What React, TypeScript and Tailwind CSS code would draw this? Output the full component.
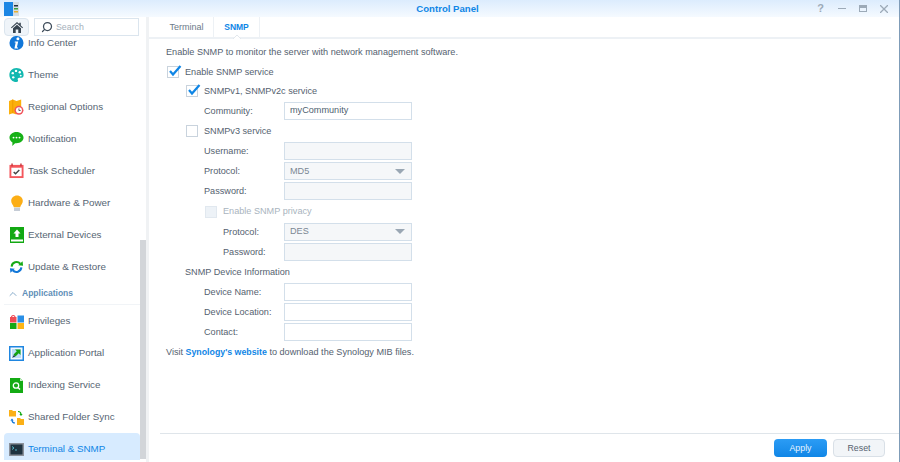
import type { ReactNode } from 'react'
import { ChevronUp, Search } from 'lucide-react'

const font = "font-['Liberation_Sans',Arial,sans-serif]"

function IconInfo() {
  return (
    <svg width="16" height="16" viewBox="0 0 16 16">
      <circle cx="8" cy="8" r="7.5" fill="#1277d8" />
      <circle cx="9.5" cy="3.4" r="1.6" fill="#fff" />
      <path d="M6.200 6.400h3.600l-1.400 6.400h1.200v1H5.800l1.300-6.400H6z" fill="#fff" />
    </svg>
  )
}

function IconTheme() {
  return (
    <svg width="16" height="16" viewBox="0 0 16 16">
      <path d="M8 .6C3.500.6.400 3.700.400 8c0 4.400 3.400 7.500 7.400 7.500 2 0 2.200-1.300 1.600-2.400-.6-1.200.2-2.300 1.600-2.300h2.400c1.500 0 2.200-1.200 2.200-2.800C15.600 3.500 12.300.6 8 .6z" fill="#12b8b0" />
      <circle cx="4" cy="6" r="1.300" fill="#fff" />
      <circle cx="7.500" cy="3.600" r="1.300" fill="#fff" />
      <circle cx="11.500" cy="5" r="1.300" fill="#fff" />
      <circle cx="4.500" cy="10.500" r="1.300" fill="#fff" />
      <circle cx="12.500" cy="8.600" r="1" fill="#fff" />
    </svg>
  )
}

function IconRegional() {
  return (
    <svg width="16" height="17" viewBox="0 0 16 17">
      <path d="M0 1.500 4 0l4 1.500L13 0v8H8v8L4 14.500 0 16z" fill="#fbb00c" />
      <path d="M4 0v14.500" stroke="#f09a00" />
      <circle cx="10.600" cy="11.500" r="4.800" fill="#f2545b" />
      <circle cx="10.600" cy="11.500" r="3.200" fill="#fff" />
      <path d="M10.600 9.500v2.200h1.800" stroke="#555" fill="none" />
    </svg>
  )
}

function IconNotification() {
  return (
    <svg width="16" height="16" viewBox="0 0 16 16">
      <path d="M8 .5c4.300 0 7.500 2.700 7.500 6s-3.200 6-7.500 6c-.5 0-1 0-1.500-.1L3.500 15.500l.2-3.900C1.700 10.500.5 8.700.5 6.500c0-3.300 3.200-6 7.500-6z" fill="#17b117" />
      <circle cx="4.800" cy="6.500" r="1" fill="#fff" />
      <circle cx="8" cy="6.500" r="1" fill="#fff" />
      <circle cx="11.200" cy="6.500" r="1" fill="#fff" />
    </svg>
  )
}

function IconTask() {
  return (
    <svg width="16" height="16" viewBox="0 0 16 16">
      <rect x="0.500" y="1.500" width="15" height="14" fill="#f4575c" />
      <rect x="2.500" y="4.500" width="11" height="9" fill="#fff" />
      <rect x="2.500" y="0" width="1.500" height="3" fill="#c9353a" />
      <rect x="12" y="0" width="1.500" height="3" fill="#c9353a" />
      <path d="m5 9 2 2 4-4" stroke="#444" strokeWidth="1.500" fill="none" />
    </svg>
  )
}

function IconBulb() {
  return (
    <svg width="14" height="17" viewBox="0 0 14 17">
      <path d="M7 .5c3.300 0 5.800 2.400 5.800 5.500 0 2.600-2 3.800-2.600 6.200H3.800C3.200 9.800 1.200 8.600 1.200 6 1.200 2.900 3.700.5 7 .5z" fill="#fcae16" />
      <rect x="4" y="12.600" width="6" height="3.400" fill="#c5ccd6" />
    </svg>
  )
}

function IconExternal() {
  return (
    <svg width="14" height="16" viewBox="0 0 14 16">
      <rect width="14" height="16" fill="#12a812" />
      <path d="M7 2.500 10.500 6.500H8.500v3.500h-3V6.500H3.500z" fill="#fff" />
      <rect x="1" y="12.500" width="12" height="2" fill="#fff" />
    </svg>
  )
}

function IconUpdate() {
  return (
    <svg width="16" height="14" viewBox="0 0 16 14">
      <path d="M2.800 6.500A5.300 5.300 0 0 1 12 3.500" stroke="#16a916" strokeWidth="2.200" fill="none" />
      <path d="M9.800 5.200 15 5.700 14.500.8z" fill="#16a916" />
      <path d="M13.200 7.500A5.300 5.300 0 0 1 4 10.500" stroke="#1277d8" strokeWidth="2.200" fill="none" />
      <path d="M6.200 8.800 1 8.300 1.500 13.200z" fill="#1277d8" />
    </svg>
  )
}

function IconPrivileges() {
  return (
    <svg width="14" height="15" viewBox="0 0 14 15">
      <rect x="0" y="3" width="6.500" height="5.500" fill="#ef4c55" />
      <path d="M1.500 3.500C1.500.8 5 .8 5 3.500" stroke="#ef4c55" strokeWidth="1.200" fill="none" />
      <rect x="7.500" y="1.500" width="6.500" height="7" fill="#2a8fe6" />
      <rect x="0" y="9" width="6.500" height="6" fill="#16a916" />
      <rect x="7.500" y="9" width="6.500" height="6" fill="#fdb515" />
    </svg>
  )
}

function IconPortal() {
  return (
    <svg width="15" height="15" viewBox="0 0 15 15">
      <rect width="15" height="15" fill="#1f86e0" />
      <rect x="1.500" y="1.500" width="12" height="12" fill="#f3f9ff" />
      <rect x="3" y="3" width="9" height="9" fill="#bcdcf7" />
      <path d="M6 3.500h5.500V9L9.700 7.200 6.500 10.500 4.500 8.500l3.300-3.200z" fill="#13a313" />
      <path d="M3.200 11.800 5 8.800l1.300 1.700z" fill="#1f3b45" />
    </svg>
  )
}

function IconIndexing() {
  return (
    <svg width="13" height="15" viewBox="0 0 13 15">
      <path d="M0 0h10l3 3v12H0z" fill="#14ab14" />
      <path d="M10 0v3h3z" fill="#c8efc8" />
      <circle cx="6" cy="7.500" r="2.700" fill="none" stroke="#fff" strokeWidth="1.300" />
      <path d="m8 9.500 2 2" stroke="#fff" strokeWidth="1.500" />
    </svg>
  )
}

function IconFolderSync() {
  return (
    <svg width="15" height="15" viewBox="0 0 15 15">
      <path d="M0 0h3l1 1h3v5.500H0z" fill="#fbb016" />
      <path d="M8 8h3l1 1h3v6H8z" fill="#fbb016" />
      <path d="M9 1.500c2 0 3 1 3 3" stroke="#16a916" strokeWidth="1.200" fill="none" />
      <path d="m10.300 4 1.700 2 1.700-2z" fill="#16a916" />
      <path d="M6 13c-2 0-3-1-3-3" stroke="#1277d8" strokeWidth="1.200" fill="none" />
      <path d="m1.300 10.500 1.700-2 1.700 2z" fill="#1277d8" />
    </svg>
  )
}

function IconTerminal() {
  return (
    <svg width="15" height="13" viewBox="0 0 15 13">
      <rect width="15" height="13" fill="#8b919a" />
      <rect x="1.500" y="1.500" width="12" height="10" fill="#1f3340" />
      <path d="m3 3.500 2 1.500-2 1.500" stroke="#58b8c8" fill="none" />
      <path d="M6 7h2" stroke="#58b8c8" />
    </svg>
  )
}

function NavItem({ icon, label, active }: { icon: ReactNode; label: string; active?: boolean }) {
  return (
    <div
      className={`flex h-8 items-center ${active ? 'rounded-sm bg-[#d7ebff] text-[#0f86e6]' : 'text-[#566573]'}`}
    >
      <div className="flex w-[20px] shrink-0 justify-center pl-[5px]">{icon}</div>
      <span className="ml-[4px] text-[9.800px] leading-none">{label}</span>
    </div>
  )
}

function Check({ checked, disabled }: { checked?: boolean; disabled?: boolean }) {
  return (
    <div
      className={`relative h-[12px] w-[12px] shrink-0 border ${disabled ? 'border-[#e1e8ef] bg-[#edf2f7]' : 'border-[#c9d3dd] bg-white'}`}
    >
      {checked && (
        <svg className="absolute -top-[2px] left-[0px]" width="14" height="12" viewBox="0 0 14 12">
          <path d="m2 6 3 3.500L12.500 1" stroke="#0f86e6" strokeWidth="2.200" fill="none" />
        </svg>
      )}
    </div>
  )
}

function Field({ label, value, select, disabled, indent }: { label: string; value?: string; select?: boolean; disabled?: boolean; indent?: boolean }) {
  return (
    <div className={`flex h-[20.100px] items-center ${indent ? 'pl-[57px]' : 'pl-[38px]'}`}>
      <span className={`whitespace-nowrap pt-[1px] leading-none text-[#55626f] ${indent ? 'w-[61px]' : 'w-[80px]'}`}>{label}</span>
      <div
        className={`flex h-[18px] w-[128px] items-center justify-between border border-[#d3dfea] px-[5px] leading-none ${disabled ? 'bg-[#f5f7f9] text-[#7a8794]' : 'bg-white text-[#4f5f70]'}`}
      >
        <span>{value}</span>
        {select && (
          <svg width="10" height="5" viewBox="0 0 10 5" className="mr-[1px]">
            <path d="M0 0h10L5 5z" fill="#9aa7b4" />
          </svg>
        )}
      </div>
    </div>
  )
}

function CheckRow({ label, checked, disabled, pad, height }: { label: string; checked?: boolean; disabled?: boolean; pad: string; height: string }) {
  return (
    <div className={`flex items-center gap-[6px] ${height} ${pad}`}>
      <Check checked={checked} disabled={disabled} />
      <span className={`pt-[1px] leading-none ${disabled ? 'text-[#a9b4be]' : 'text-[#55626f]'}`}>{label}</span>
    </div>
  )
}

export default function App() {
  return (
    <div className={`flex h-[462px] w-[900px] flex-col overflow-hidden border-r border-[#7f9cb8] bg-white ${font}`}>
      {/* Title bar */}
      <div className="grid h-[17px] shrink-0 grid-cols-[100px_1fr_100px] items-center bg-gradient-to-b from-[#dcecfd] to-[#f5faff]">
        <div className="pl-[4px]">
          <svg width="15" height="14" viewBox="0 0 15 14">
            <rect width="9" height="14" fill="#1b86e4" />
            <rect x="9" width="6" height="14" fill="#d5dde4" />
            <rect x="10" y="3" width="4" height="1.500" fill="#26323d" />
            <rect x="10" y="6" width="4" height="1.500" fill="#3da03d" />
            <rect x="10" y="9" width="4" height="1.500" fill="#e8b030" />
          </svg>
        </div>
        <div className="pr-[4px] text-center text-[9.600px] font-bold leading-none text-[#0f86e6]">Control Panel</div>
        <div className="flex items-center justify-end pr-[5px] text-[#9caab8]">
          <div className="flex w-[21px] justify-center text-[11px] font-bold leading-none">?</div>
          <div className="flex w-[21px] justify-center">
            <div className="h-[1.500px] w-[8px] bg-[#9caab8]" />
          </div>
          <div className="flex w-[21px] justify-center">
            <div className="h-[7px] w-[8px] border border-t-[3px] border-[#9caab8]" />
          </div>
          <div className="flex w-[21px] justify-center">
            <svg width="8" height="8" viewBox="0 0 8 8">
              <path d="m0 0 8 8M8 0 0 8" stroke="#9caab8" strokeWidth="1.300" />
            </svg>
          </div>
        </div>
      </div>

      <div className="flex min-h-0 flex-1">
        {/* Sidebar */}
        <aside className="relative w-[149px] shrink-0 overflow-hidden border-r-[3px] border-[#f0f2f4]">
          <div className="flex h-[19px] gap-[5px] bg-white pl-[4px] pt-[1px]">
            <div className="flex h-[18px] w-[25px] items-center justify-center rounded-sm border border-[#dbe5ee] bg-[#eff4f9]">
              <svg width="12" height="11" viewBox="0 0 12 11">
                <path d="M6 0 0 5.500l.7.800L6 1.500l5.300 4.800.7-.8L9.800 3.500V.8H8.300v1.300z" fill="#36434f" />
                <path d="M2 6.300 6 2.700l4 3.600V11H7.300V7.500H4.700V11H2z" fill="#36434f" />
              </svg>
            </div>
            <div className="flex h-[18px] w-[105px] items-center gap-[3px] border border-[#dbe5ee] bg-white pl-[6px] text-[8.800px] leading-none text-[#a5b0bb]">
              <Search size={12} className="-scale-x-100 text-[#3e4c5a]" strokeWidth={2.500} />
              <span>Search</span>
            </div>
          </div>
          <div className="h-[424px] w-[140px] overflow-hidden pl-[4px]">
            <div className="-mt-[9px]">
              <NavItem icon={<IconInfo />} label="Info Center" />
              <NavItem icon={<IconTheme />} label="Theme" />
              <NavItem icon={<IconRegional />} label="Regional Options" />
              <NavItem icon={<IconNotification />} label="Notification" />
              <NavItem icon={<IconTask />} label="Task Scheduler" />
              <NavItem icon={<IconBulb />} label="Hardware & Power" />
              <NavItem icon={<IconExternal />} label="External Devices" />
              <NavItem icon={<IconUpdate />} label="Update & Restore" />
              <div className="flex h-[22px] items-center gap-[3px] border-b border-[#f1f4f7] pl-[3px] text-[8.500px] font-bold leading-none text-[#5f8fb8]">
                <ChevronUp size={12} strokeWidth={1.500} />
                <span>Applications</span>
              </div>
              <NavItem icon={<IconPrivileges />} label="Privileges" />
              <NavItem icon={<IconPortal />} label="Application Portal" />
              <NavItem icon={<IconIndexing />} label="Indexing Service" />
              <NavItem icon={<IconFolderSync />} label="Shared Folder Sync" />
              <NavItem active icon={<IconTerminal />} label="Terminal & SNMP" />
            </div>
          </div>
          <div className="absolute left-[140px] top-[223px] h-[219px] w-[6px] bg-[#d2d5d9]" />
        </aside>

        {/* Main panel */}
        <main className="flex min-w-0 flex-1 flex-col">
          <div className="mr-[8px] flex h-[22px] shrink-0 border-b-2 border-[#edf1f5] pl-[11px] leading-none">
            <div className="flex w-[54px] items-center justify-center border-r border-[#edf1f5] text-[9px] text-[#6c7a88]">Terminal</div>
            <div className="relative flex w-[46px] items-center justify-center border-r border-[#edf1f5] text-[8.500px] font-bold text-[#0f86e6]">
              SNMP
              <svg className="absolute -bottom-[2px] left-[19px]" width="8" height="4" viewBox="0 0 8 4">
                <path d="M0 4 4 0l4 4" fill="#fff" stroke="#e3e8ed" />
              </svg>
            </div>
          </div>
          <div className="flex-1 pl-[17px] pt-[3px] text-[9.150px] text-[#55626f]">
            <div className="flex h-[20px] items-center pt-[1px] leading-none">Enable SNMP to monitor the server with network management software.</div>
            <CheckRow label="Enable SNMP service" checked height="h-[19.500px]" pad="pl-[1px]" />
            <CheckRow label="SNMPv1, SNMPv2c service" checked height="h-[19.500px]" pad="pl-[20px]" />
            <Field label="Community:" value="myCommunity" />
            <CheckRow label="SNMPv3 service" height="h-[20.100px]" pad="pl-[20px]" />
            <Field label="Username:" disabled />
            <Field label="Protocol:" value="MD5" select disabled />
            <Field label="Password:" disabled />
            <CheckRow label="Enable SNMP privacy" disabled height="h-[20.100px]" pad="pl-[39px]" />
            <Field label="Protocol:" value="DES" select disabled indent />
            <Field label="Password:" disabled indent />
            <div className="flex h-[20.100px] items-center pl-[19px] pt-[1px] leading-none">SNMP Device Information</div>
            <Field label="Device Name:" />
            <Field label="Device Location:" />
            <Field label="Contact:" />
            <div className="flex h-[20.100px] items-center gap-[2.500px] leading-none">
              <span>Visit</span>
              <span className="text-[8.800px] font-bold text-[#0f86e6]">Synology's website</span>
              <span>to download the Synology MIB files.</span>
            </div>
          </div>
          <div className="ml-[11px] flex h-[29px] shrink-0 items-start justify-end gap-[6px] border-t border-[#dfe5ea] pr-[14px] pt-[5px] text-[8.800px] leading-none">
            <button className="h-[18px] w-[53px] rounded-sm bg-gradient-to-b from-[#2b9cf5] to-[#0f86e6] text-[#e8f4ff]">Apply</button>
            <button className="h-[18px] w-[52px] rounded-sm border border-[#d9e0e7] bg-[#f2f5f8] text-[#55626f]">Reset</button>
          </div>
        </main>
      </div>
    </div>
  )
}
